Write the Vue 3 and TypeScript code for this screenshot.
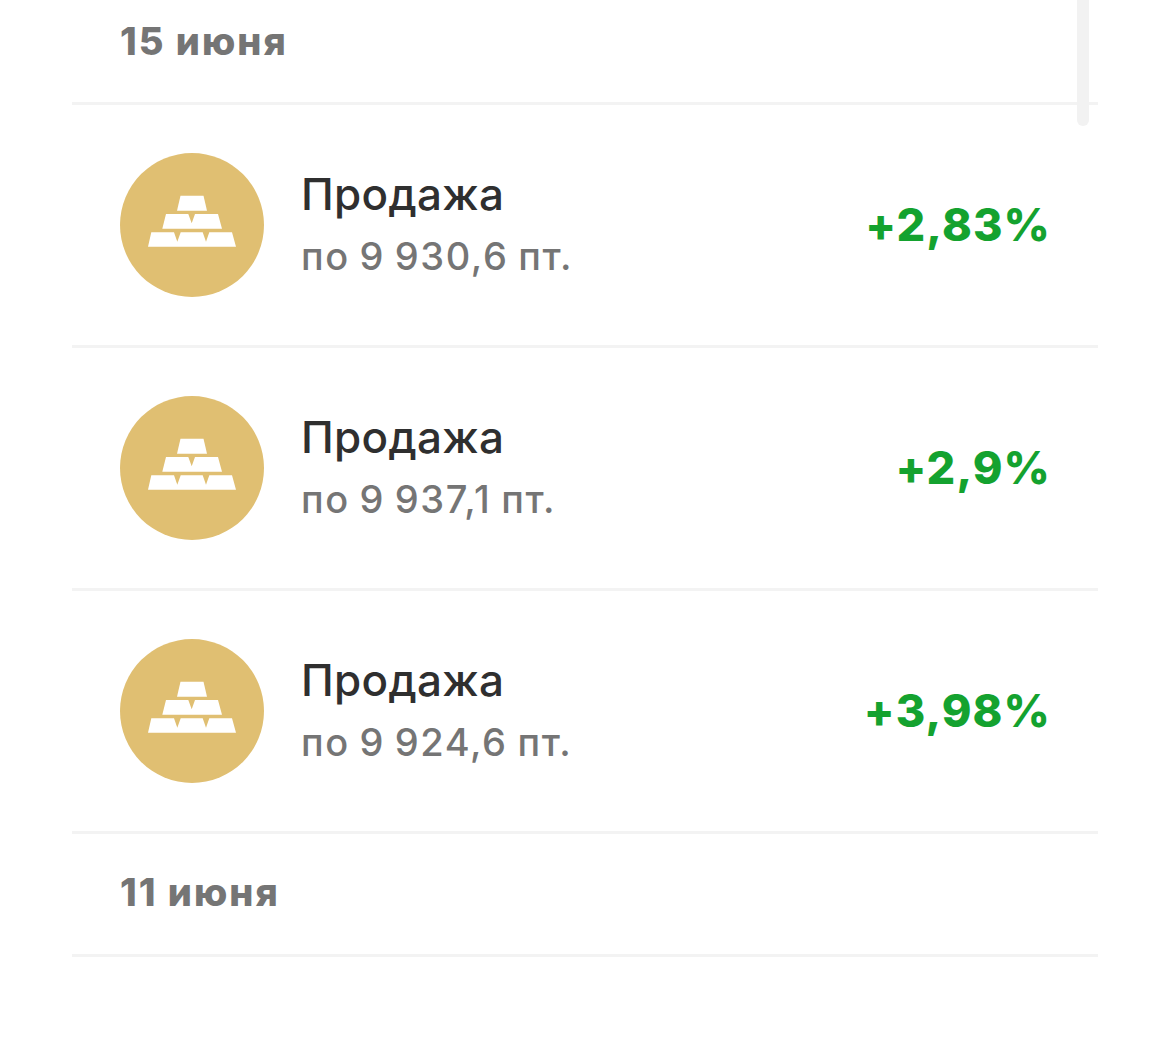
<script setup lang="ts">
interface Sale { price: string; gain: string }
interface Group { date: string; sales: Sale[] }
const groups: Group[] = [
  { date: '15 июня', sales: [
    { price: 'по 9 930,6 пт.', gain: '+2,83%' },
    { price: 'по 9 937,1 пт.', gain: '+2,9%' },
    { price: 'по 9 924,6 пт.', gain: '+3,98%' },
  ] },
  { date: '11 июня', sales: [] },
]
</script>

<template>
  <div class="page">
    <div class="list">
      <template v-for="(g, i) in groups" :key="g.date">
        <div class="date" :class="{ first: i === 0 }">{{ g.date }}</div>
        <div v-for="s in g.sales" :key="s.price" class="row">
          <svg class="icon" viewBox="0 0 144 144" width="144" height="144">
            <circle cx="72" cy="72" r="72" fill="#e0bf72" />
            <g fill="#fff">
              <path d="M60.500 42.700H83.500L87 57.700H57Z" />
              <path d="M46 61H68.300L71.700 70.300L75 61H98L102 75.700H42.300Z" />
              <path d="M31.300 79.300H54L57.300 88.700L60.700 79.300H82.700L86 88.700L89.300 79.300H112L116 93.700H28Z" />
            </g>
          </svg>
          <div class="info">
            <div class="title">Продажа</div>
            <div class="price">{{ s.price }}</div>
          </div>
          <div class="gain">{{ s.gain }}</div>
        </div>
      </template>
    </div>
    <div class="scrollbar"></div>
  </div>
</template>

<style>
html, body { margin: 0; background: #fff; }
</style>

<style scoped>
.page {
  position: relative;
  width: 1170px;
  height: 1062px;
  overflow: hidden;
  background: #fff;
  font-family: Inter, "Noto Sans", sans-serif;
}
.list {
  margin-left: 72px;
  width: 1026px;
}
.date {
  height: 123px;
  padding-left: 48px;
  padding-bottom: 4px;
  display: flex;
  align-items: center;
  box-sizing: border-box;
  border-bottom: 3px solid #f3f3f3;
  font-size: 38px;
  font-weight: 800;
  letter-spacing: 2px;
  color: #757575;
}
.date.first {
  height: 105px;
  padding-bottom: 20px;
}
.row {
  height: 243px;
  box-sizing: border-box;
  padding: 0 47px 4px 48px;
  display: flex;
  align-items: center;
  border-bottom: 3px solid #f3f3f3;
}
.icon {
  flex: none;
  display: block;
  margin-bottom: -4px;
}
.info {
  margin-left: 37px;
  flex: 1;
}
.title {
  font-size: 44px;
  font-weight: 500;
  line-height: 50px;
  letter-spacing: 0.3px;
  color: #2f2f2f;
}
.price {
  margin-top: 15px;
  font-size: 38px;
  font-weight: 500;
  line-height: 44px;
  letter-spacing: 1.6px;
  word-spacing: -2px;
  color: #757575;
}
.gain {
  padding-top: 2px;
  font-size: 45px;
  font-weight: 800;
  letter-spacing: 1.1px;
  color: #14a22f;
}
.scrollbar {
  position: absolute;
  top: -10px;
  left: 1077px;
  width: 12px;
  height: 136px;
  border-radius: 6px;
  background: #f2f2f2;
}
</style>
